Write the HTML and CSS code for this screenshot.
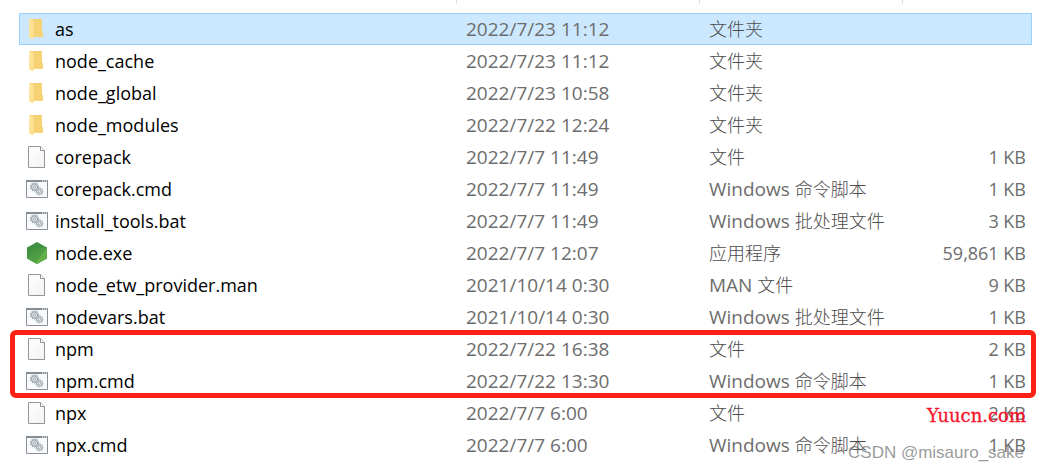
FILE: index.html
```html
<!DOCTYPE html>
<html lang="zh-CN">
<head>
<meta charset="utf-8">
<title>nodejs</title>
<link rel="stylesheet" href="styles.css">
</head>
<body>
<svg class="sprite" aria-hidden="true">
  <defs>
    <linearGradient id="flap" x1="0" y1="0" x2="1" y2="1"><stop offset="0" stop-color="#ffe7a0"/><stop offset="1" stop-color="#fbdc88"/></linearGradient>
    <linearGradient id="paper" x1="0" y1="0" x2="1" y2="1"><stop offset="0" stop-color="#fff"/><stop offset="1" stop-color="#f1f2f2"/></linearGradient>
    <linearGradient id="side" x1="0" y1="0" x2="0" y2="1"><stop offset="0" stop-color="#3c8a3c"/><stop offset="1" stop-color="#55a548"/></linearGradient>
    <linearGradient id="face" x1="0" y1="0" x2="1" y2="1"><stop offset="0" stop-color="#3f8d3e"/><stop offset="1" stop-color="#5eae49"/></linearGradient>
  </defs>
  <symbol id="folder" viewBox="0 0 22 22">
    <path d="M3 1h13v12h1v6H5z" fill="#f5d274"/>
    <path d="M3 1l5.500 2v15.500L6.500 21.500 3 19z" fill="url(#flap)"/>
    <path d="M8.500 3v15.500" stroke="#efc966" stroke-width=".6"/>
  </symbol>
  <symbol id="file" viewBox="0 0 22 22">
    <path d="M2.500.5h12l4 4v17h-16z" fill="url(#paper)" stroke="#929597"/>
    <path d="M14.500.5v4h4" fill="#fff" stroke="#929597"/>
  </symbol>
  <symbol id="script" viewBox="0 0 22 22">
    <path d="M.5 2.500h21v17H.5z" fill="#f8fafb" stroke="#898f94"/>
    <path d="M0 2h22v2H0z" fill="#858c92"/>
    <path d="M16 3h1m1 0h1m1 0h1" stroke="#fff"/>
    <circle cx="8.500" cy="9" r="3.800" fill="#dce2e6" stroke="#a0a9b1" stroke-width="1.600" stroke-dasharray="1.500 .9"/>
    <circle cx="8.500" cy="9" r="3" fill="#e3e8eb" stroke="#9aa5ae"/>
    <circle cx="8.500" cy="9" r="1.200" fill="#fff" stroke="#8795a0" stroke-width=".7"/>
    <circle cx="13.500" cy="13.500" r="3.200" fill="#dce5ea" stroke="#a0abb3" stroke-width="1.500" stroke-dasharray="1.300 .8"/>
    <circle cx="13.500" cy="13.500" r="2.400" fill="#e5edf1" stroke="#a3aeb6" stroke-width=".8"/>
    <circle cx="13.500" cy="13.500" r="1" fill="#fff" stroke="#8795a0" stroke-width=".7"/>
  </symbol>
  <symbol id="node" viewBox="0 0 22 22">
    <path d="M11 0l10 5.500v11L11 22 1 16.500v-11z" fill="#418f40"/>
    <path d="M1 5.500L21 5.500 9 20.900z" fill="url(#face)"/>
    <path d="M21 5.500v11L11 22 9 20.900z" fill="#62b04a"/>
    <path d="M1 5.500v11l8 4.400z" fill="url(#side)"/>
  </symbol>
</svg>
<main class="explorer">
  <table class="files">
    <colgroup><col><col class="col-date"><col class="col-type"><col class="col-size"></colgroup>
    <thead><tr><th></th><th></th><th></th><th></th></tr></thead>
    <tbody>
      <tr class="selected"><td><span class="name"><svg class="icon"><use href="#folder"/></svg>as</span></td><td>2022/7/23 11:12</td><td><span class="zh">文件夹</span></td><td></td></tr>
      <tr><td><span class="name"><svg class="icon"><use href="#folder"/></svg>node_cache</span></td><td>2022/7/23 11:12</td><td><span class="zh">文件夹</span></td><td></td></tr>
      <tr><td><span class="name"><svg class="icon"><use href="#folder"/></svg>node_global</span></td><td>2022/7/23 10:58</td><td><span class="zh">文件夹</span></td><td></td></tr>
      <tr><td><span class="name"><svg class="icon"><use href="#folder"/></svg>node_modules</span></td><td>2022/7/22 12:24</td><td><span class="zh">文件夹</span></td><td></td></tr>
      <tr><td><span class="name"><svg class="icon"><use href="#file"/></svg>corepack</span></td><td>2022/7/7 11:49</td><td><span class="zh">文件</span></td><td>1 KB</td></tr>
      <tr><td><span class="name"><svg class="icon"><use href="#script"/></svg>corepack.cmd</span></td><td>2022/7/7 11:49</td><td>Windows <span class="zh">命令脚本</span></td><td>1 KB</td></tr>
      <tr><td><span class="name"><svg class="icon"><use href="#script"/></svg>install_tools.bat</span></td><td>2022/7/7 11:49</td><td>Windows <span class="zh">批处理文件</span></td><td>3 KB</td></tr>
      <tr><td><span class="name"><svg class="icon"><use href="#node"/></svg>node.exe</span></td><td>2022/7/7 12:07</td><td><span class="zh">应用程序</span></td><td>59,861 KB</td></tr>
      <tr><td><span class="name"><svg class="icon"><use href="#file"/></svg>node_etw_provider.man</span></td><td>2021/10/14 0:30</td><td>MAN <span class="zh">文件</span></td><td>9 KB</td></tr>
      <tr><td><span class="name"><svg class="icon"><use href="#script"/></svg>nodevars.bat</span></td><td>2021/10/14 0:30</td><td>Windows <span class="zh">批处理文件</span></td><td>1 KB</td></tr>
    </tbody>
    <tbody class="marked">
      <tr><td><span class="name"><svg class="icon"><use href="#file"/></svg>npm</span></td><td>2022/7/22 16:38</td><td><span class="zh">文件</span></td><td>2 KB</td></tr>
      <tr><td><span class="name"><svg class="icon"><use href="#script"/></svg>npm.cmd</span></td><td>2022/7/22 13:30</td><td>Windows <span class="zh">命令脚本</span></td><td>1 KB</td></tr>
    </tbody>
    <tbody>
      <tr><td><span class="name"><svg class="icon"><use href="#file"/></svg>npx</span></td><td>2022/7/7 6:00</td><td><span class="zh">文件</span></td><td>2 KB</td></tr>
      <tr><td><span class="name"><svg class="icon"><use href="#script"/></svg>npx.cmd</span></td><td>2022/7/7 6:00</td><td>Windows <span class="zh">命令脚本</span></td><td>1 KB</td></tr>
    </tbody>
  </table>
  <span class="site">Yuucn.com</span>
  <span class="credit">CSDN @misauro_sake</span>
</main>
</body>
</html>
```
FILE: styles.css
```css
body {
  margin: 0;
  background: #fff;
  color: #6d6d6d;
  font: 19px/32px "Open Sans", "Noto Sans CJK SC", sans-serif;
}

.sprite {
  position: absolute;
  width: 0;
  height: 0;
}

.explorer {
  position: relative;
  padding: 0 6px 10px 19px;
}

.files {
  width: 100%;
  table-layout: fixed;
  border-collapse: separate;
  border-spacing: 0;
}

.col-date { width: 243px; }
.col-type { width: 203px; }
.col-size { width: 130px; }

th {
  height: 13px;
  padding: 0;
  background: linear-gradient(#dedede, #dedede) no-repeat left top / 1px 4px;
}

th:first-child { background: none; }

td {
  height: 32px;
  padding: 0 0 0 10px;
  white-space: nowrap;
}

td:first-child {
  padding-left: 7px;
  color: #000;
  font-size: 18px;
}

td:last-child {
  padding: 0 6px 0 0;
  font-size: 18px;
  text-align: right;
}

.selected {
  background: #cce8ff;
  box-shadow: inset 0 0 0 1px #99d1ff;
}

.name {
  display: flex;
  align-items: center;
  gap: 7px;
}

.icon {
  width: 22px;
  height: 22px;
}

.zh {
  color: #4c4c4c;
  font-size: 18px;
  font-weight: 300;
  line-height: 1;
}

.marked { position: relative; }

.marked::after {
  content: "";
  position: absolute;
  inset: -3px -4px -1px -9px;
  border: 5px solid #ff2015;
  border-radius: 6px;
}

.site,
.credit {
  position: absolute;
}

.site {
  right: 12px;
  bottom: 43px;
  color: #f5142c;
  font: 18px/24px "DejaVu Serif", serif;
  -webkit-text-stroke: 0.3px #f5142c;
}

.credit {
  right: 14px;
  bottom: 6px;
  color: rgba(120, 120, 120, 0.75);
  font: 17px/24px "Liberation Sans", sans-serif;
}
```
